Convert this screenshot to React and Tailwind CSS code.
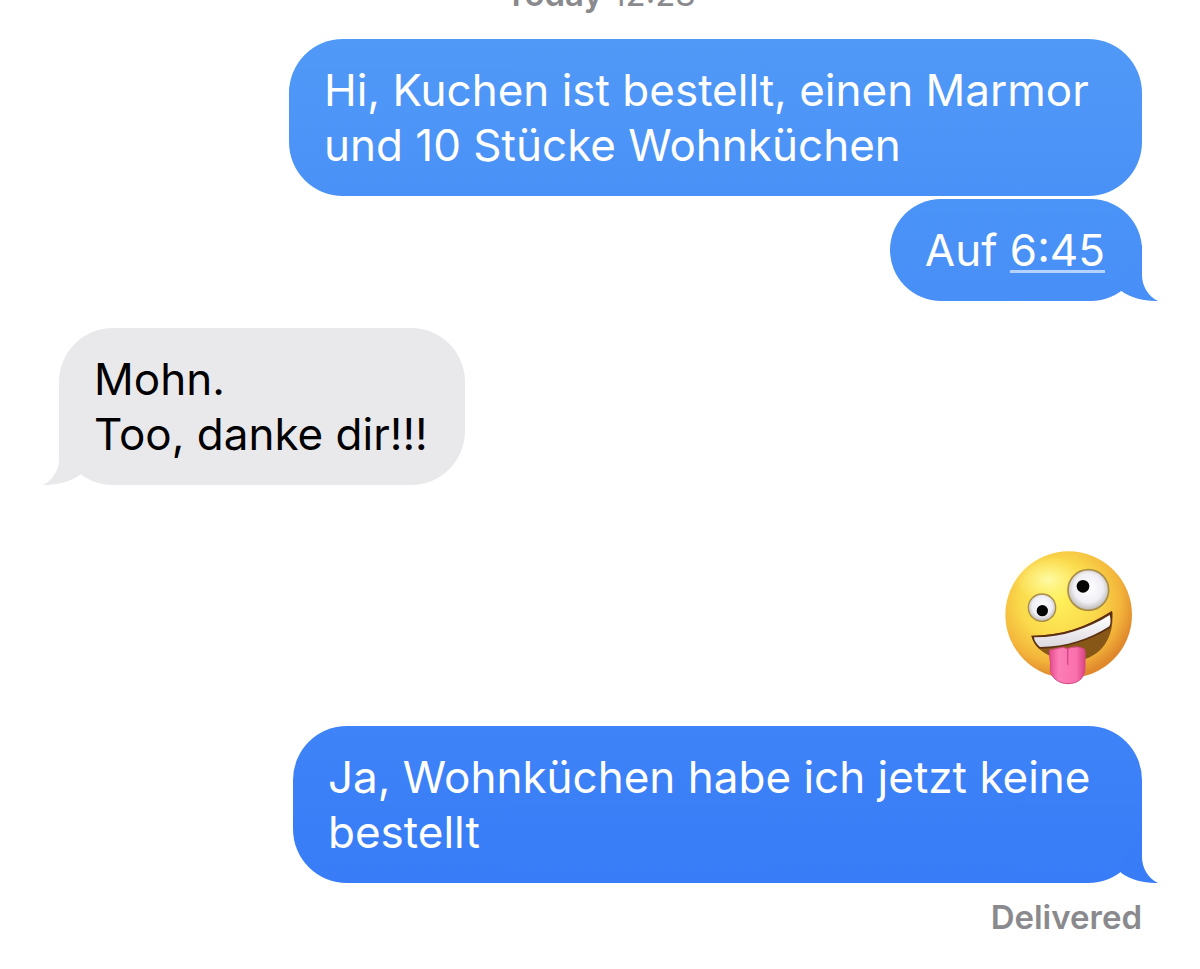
import React from 'react';

const Tail = ({ side, color }) => (
  <svg
    viewBox="0 0 56 56"
    aria-hidden="true"
    className={
      side === 'right'
        ? 'absolute bottom-0 -right-4 size-14'
        : 'absolute bottom-0 -left-4 size-14 -scale-x-100'
    }
  >
    <path d="M39 0H40V30C40 41 46 51 56 56C43 56.2 29 53.5 19 45.8L18 40L36 14Z" fill={color} />
  </svg>
);

const Bubble = ({ side = 'right', tone, tail, children }) => (
  <div
    className={`relative w-fit rounded-[54px] pl-[35px] pr-[37px] pt-6 pb-[23px] text-[44px] leading-[55px] whitespace-pre-line ${
      side === 'right' ? 'self-end' : 'self-start'
    } ${tone}`}
  >
    {tail && <Tail side={side} color={tail} />}
    <p className="relative">{children}</p>
  </div>
);

const ZanyFace = () => (
  <svg viewBox="45 32 384 402" role="img" aria-label="Zany face" className="w-32 h-[134px]">
    <defs>
      <radialGradient id="skin" cx="0.42" cy="0.38" r="0.62">
        <stop offset="0" stopColor="#fff15a" />
        <stop offset="0.5" stopColor="#fad94b" />
        <stop offset="0.8" stopColor="#f3b43a" />
        <stop offset="1" stopColor="#df882c" />
      </radialGradient>
      <radialGradient id="shine" cx="0.5" cy="0.5" r="0.5">
        <stop offset="0" stopColor="#fffdb0" stopOpacity="0.9" />
        <stop offset="1" stopColor="#fff98a" stopOpacity="0" />
      </radialGradient>
      <radialGradient id="eye" cx="0.5" cy="0.45" r="0.55">
        <stop offset="0" stopColor="#ffffff" />
        <stop offset="0.65" stopColor="#f0eff5" />
        <stop offset="1" stopColor="#bbb7b4" />
      </radialGradient>
      <linearGradient id="tongue" x1="0" y1="0" x2="1" y2="0">
        <stop offset="0" stopColor="#e54c8d" />
        <stop offset="0.25" stopColor="#fc7db5" />
        <stop offset="0.75" stopColor="#fa70ad" />
        <stop offset="1" stopColor="#d94381" />
      </linearGradient>
      <linearGradient id="teeth" x1="0" y1="0" x2="0" y2="1">
        <stop offset="0" stopColor="#ffffff" />
        <stop offset="1" stopColor="#dcd9df" />
      </linearGradient>
    </defs>
    <circle cx="236" cy="223" r="190" fill="url(#skin)" />
    <ellipse cx="175" cy="118" rx="105" ry="70" fill="url(#shine)" />
    <circle cx="156" cy="202" r="41" fill="url(#eye)" stroke="#a98e45" strokeWidth="4" />
    <circle cx="295" cy="149" r="61" fill="url(#eye)" stroke="#a98e45" strokeWidth="5" />
    <circle cx="157" cy="211" r="17" fill="#050505" />
    <circle cx="279" cy="138" r="19" fill="#050505" />
    <path
      d="M124 286C207 287 292 260 362 214Q367 211 367 218C372 284 342 337 286 356C225 370 145 351 124 286Z"
      fill="#875718"
    />
    <path
      d="M124 286C207 287 292 260 362 214Q367 211 367 218Q367 243 362 262C301 299 230 324 147 325Q130 310 124 286Z"
      fill="#5c2f12"
    />
    <path d="M132 291C212 292 293 266 359 224Q365 245 358 258C300 296 228 320 150 320Q133 306 132 291Z" fill="url(#teeth)" />
    <path
      d="M179 329Q202 324 219 321Q232 328 245 321Q266 316 283 326Q287 334 285 348V383C285 416 261 430 234 430C205 430 182 411 181 388Q183 367 179 350Z"
      fill="url(#tongue)"
      stroke="#d44882"
      strokeWidth="3"
    />
    <path d="M233 327V372" stroke="#d64283" strokeWidth="4" strokeLinecap="round" />
  </svg>
);

const App = () => {
  return (
    <main className="flex flex-col overflow-hidden bg-white pl-[59px] pr-[58px] font-['Inter','Liberation_Sans',sans-serif]">
      <div className="-mt-[26px] h-[65px] text-center text-[33px] leading-10 text-[#8a8a8e]">
        <span className="font-semibold">Today</span> <time>12:28</time>
      </div>

      <Bubble tone="max-w-[853px] bg-linear-to-b from-[#5099f7] to-[#4a91f7] text-white">
        Hi, Kuchen ist bestellt, einen Marmor und 10 Stücke Wohnküchen
      </Bubble>
      <div className="mt-[3px] flex flex-col">
        <Bubble tone="bg-linear-to-b from-[#4a93f7] to-[#488ff7] text-white" tail="#488ff7">
          Auf{' '}
          <a href="#time" className="underline decoration-white/60 decoration-3 underline-offset-4">
            6:45
          </a>
        </Bubble>
      </div>

      <div className="mt-[27px] flex flex-col">
        <Bubble side="left" tone="bg-[#e9e9eb] text-black" tail="#e9e9eb">
          {'Mohn.\nToo, danke dir!!!'}
        </Bubble>
      </div>

      <div className="mt-[66px] mr-[9px] self-end">
        <ZanyFace />
      </div>

      <div className="mt-[41px] flex flex-col">
        <Bubble tone="max-w-[849px] bg-linear-to-b from-[#3e83f7] to-[#387cf7] text-white" tail="#387cf7">
          Ja, Wohnküchen habe ich jetzt keine bestellt
        </Bubble>
      </div>
      <p className="mt-3.5 self-end text-[33px] leading-10 font-semibold text-[#8a8a8e]">Delivered</p>
    </main>
  );
};

export default App;
